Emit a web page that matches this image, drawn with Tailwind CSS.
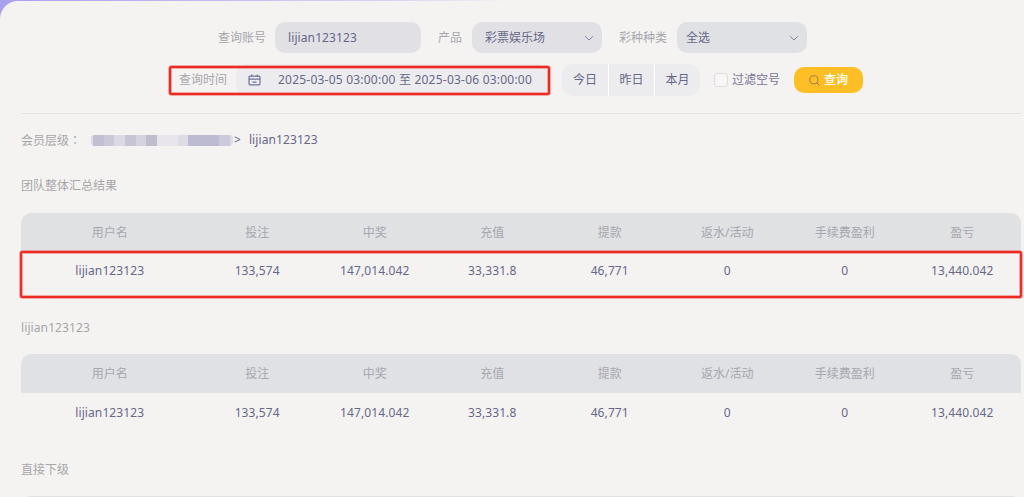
<!DOCTYPE html>
<html lang="zh-CN">
<head>
  <meta charset="UTF-8" />
  <meta name="viewport" content="width=device-width, initial-scale=1.0"/>
  <title>报表查询</title>
  <script src="https://cdn.jsdelivr.net/npm/@tailwindcss/browser@4"></script>
  <style>
    body {
      font-family: 'Noto Sans', 'Noto Sans CJK SC', sans-serif;
    }
  </style>
</head>
<body class="h-[497px] overflow-hidden bg-linear-to-r from-[#a99ff0] via-[#dcd6f1] via-40% to-[#f5f3f3] to-50% pt-px text-xs text-[#66678a]">

  <!-- Panel -->
  <div class="relative h-[496px] overflow-hidden rounded-tl-[18px] bg-[#f5f3f2] pl-[21px] pr-[3px]">

    <!-- Filters: first row -->
    <div class="flex h-[31px] items-center mt-[21px] pl-[197px]">
      <label class="w-[57px] text-[#a6a6ac]">查询账号</label>
      <div class="flex h-[31px] w-[146px] items-center rounded-[10px] bg-[#e1e1e5] pl-[13px] tracking-[0.1px]">lijian123123</div>
      <label class="ml-[17px] w-[34px] text-[#a6a6ac]">产品</label>
      <div class="flex h-[31px] w-[130px] items-center justify-between rounded-[10px] bg-[#e1e1e5] pl-[13px] pr-2">
        <span>彩票娱乐场</span>
        <svg class="h-[10px] w-[10px]" viewBox="0 0 10 10" fill="none" stroke="#85869f" stroke-width="1"><path d="M1 3.2 5 7l4-3.8"/></svg>
      </div>
      <label class="ml-[17px] w-[58px] text-[#a6a6ac]">彩种种类</label>
      <div class="flex h-[31px] w-[130px] items-center justify-between rounded-[10px] bg-[#e0e1e4] pl-[9px] pr-2">
        <span>全选</span>
        <svg class="h-[10px] w-[10px]" viewBox="0 0 10 10" fill="none" stroke="#85869f" stroke-width="1"><path d="M1 3.2 5 7l4-3.8"/></svg>
      </div>
    </div>

    <!-- Filters: second row -->
    <div class="mt-[11px] flex h-8 items-center pl-[158px]">
      <label class="w-[57px] text-[#a6a6ac]">查询时间</label>
      <div class="flex h-8 w-[312px] items-center rounded-[10px] bg-[#ececee] pl-3">
        <svg class="h-3 w-[13px]" viewBox="0 0 13 12" fill="none" stroke="#6f71a3" stroke-width="1.2"><rect x="1" y="2.2" width="11" height="8.6" rx="1"/><path d="M1 5.2h11M3.7.6v2.4M9.3.6v2.4M4.5 8.2h4"/></svg>
        <span class="ml-[17px] whitespace-nowrap pb-px tracking-[0.22px]">2025-03-05 03:00:00 至 2025-03-06 03:00:00</span>
      </div>
      <div class="ml-[14px] flex h-8 w-[138px] gap-px overflow-hidden rounded-[10px] bg-white">
        <button class="w-[46px] bg-[#ececee] pb-px">今日</button>
        <button class="w-[45px] bg-[#ececee] pb-px">昨日</button>
        <button class="w-[45px] bg-[#ececee] pb-px">本月</button>
      </div>
      <span class="ml-[14px] h-[14px] w-[14px] rounded-[3px] border border-[#dddde0] bg-[#f8f6f6]"></span>
      <span class="ml-1 w-[48px] whitespace-nowrap text-[#77749a]">过滤空号</span>
      <button class="ml-[14px] flex h-[26px] w-[69px] items-center justify-center rounded-[10px] bg-[#fdbf25] text-white">
        <svg class="mr-1 h-[11px] w-[11px]" viewBox="0 0 11 11" fill="none" stroke="#a27a48" stroke-width="1"><circle cx="4.8" cy="4.8" r="4.1"/><path d="m7.7 7.7 2.8 2.8"/></svg>
        <span class="font-medium">查询</span>
      </button>
    </div>

    <div class="mt-[17px] h-px bg-[#e4e3e3]"></div>

    <!-- Member level -->
    <div class="mt-[17px] flex h-[18px] items-center">
      <span class="w-[70px] text-[#a6a6a8]">会员层级<span lang="zh-TW" class="font-['Noto_Sans_CJK_TC']">：</span></span>
      <div class="flex h-[11px] w-[142px] overflow-hidden rounded-[4px] bg-[#e9e7ee]">
        <span class="w-[2px] bg-[#dddbe5]"></span>
        <span class="w-[11px] bg-[#c2bfd2]"></span>
        <span class="w-[10px] bg-[#cbc9d8]"></span>
        <span class="w-[11px] bg-[#dbd9e3]"></span>
        <span class="w-[11px] bg-[#c7c4d6]"></span>
        <span class="w-[10px] bg-[#d5d3df]"></span>
        <span class="w-[11px] bg-[#bfbccd]"></span>
        <span class="w-[21px] bg-[#e8e6ec]"></span>
        <span class="w-[10px] bg-[#dddbe3]"></span>
        <span class="w-[31px] bg-[#bdbbd2]"></span>
        <span class="w-[11px] bg-[#cccad9]"></span>
        <span class="w-[3px] bg-[#dddbe3]"></span>
      </div>
      <span class="ml-px">&gt;</span>
      <span class="ml-[8px] tracking-[0.1px]">lijian123123</span>
    </div>

    <!-- Team summary -->
    <h2 class="mt-7 h-[18px] leading-[18px] text-[#a6a6a8]">团队整体汇总结果</h2>
    <div class="mt-[18px]">
      <div class="grid h-[39px] grid-cols-[1.51fr_repeat(7,1fr)] items-center rounded-t-[10px] bg-[#e0e1e3] text-center text-[#a6a6b0]">
        <span>用户名</span><span>投注</span><span>中奖</span><span>充值</span><span>提款</span><span>返水/活动</span><span>手续费盈利</span><span>盈亏</span>
      </div>
      <div class="grid h-[38px] grid-cols-[1.51fr_repeat(7,1fr)] items-center text-center tracking-[0.1px]">
        <span>lijian123123</span><span>133,574</span><span>147,014.042</span><span>33,331.8</span><span>46,771</span><span>0</span><span>0</span><span>13,440.042</span>
      </div>
    </div>

    <!-- Member summary -->
    <h2 class="mt-[29px] h-[18px] leading-[18px] tracking-[0.1px] text-[#a6a6a8]">lijian123123</h2>
    <div class="mt-[17px]">
      <div class="grid h-[39px] grid-cols-[1.51fr_repeat(7,1fr)] items-center rounded-t-[10px] bg-[#e0e1e4] text-center text-[#a6a6b0]">
        <span>用户名</span><span>投注</span><span>中奖</span><span>充值</span><span>提款</span><span>返水/活动</span><span>手续费盈利</span><span>盈亏</span>
      </div>
      <div class="grid h-[39px] grid-cols-[1.51fr_repeat(7,1fr)] items-center text-center tracking-[0.1px]">
        <span>lijian123123</span><span>133,574</span><span>147,014.042</span><span>33,331.8</span><span>46,771</span><span>0</span><span>0</span><span>13,440.042</span>
      </div>
    </div>

    <!-- Direct members -->
    <h2 class="mt-[29px] h-[18px] leading-[18px] text-[#a6a6a8]">直接下级</h2>
    <div class="mt-[17px] h-[39px] rounded-t-[10px] bg-[#e0e1e4]"></div>

    <!-- Highlight boxes -->
    <div class="absolute left-[169px] top-[65px] h-[29px] w-[381px] rounded-[2px] border-2 border-[#ec2b24] shadow-[0_0_0_0.5px_#f0605a,inset_0_0_0_0.5px_#f0605a]"></div>
    <div class="absolute left-[20px] top-[250px] h-[47px] w-[1002px] rounded-[2px] border-2 border-[#ec2b24] shadow-[0_0_0_0.5px_#f0605a,inset_0_0_0_0.5px_#f0605a]"></div>
  </div>

</body>
</html>
